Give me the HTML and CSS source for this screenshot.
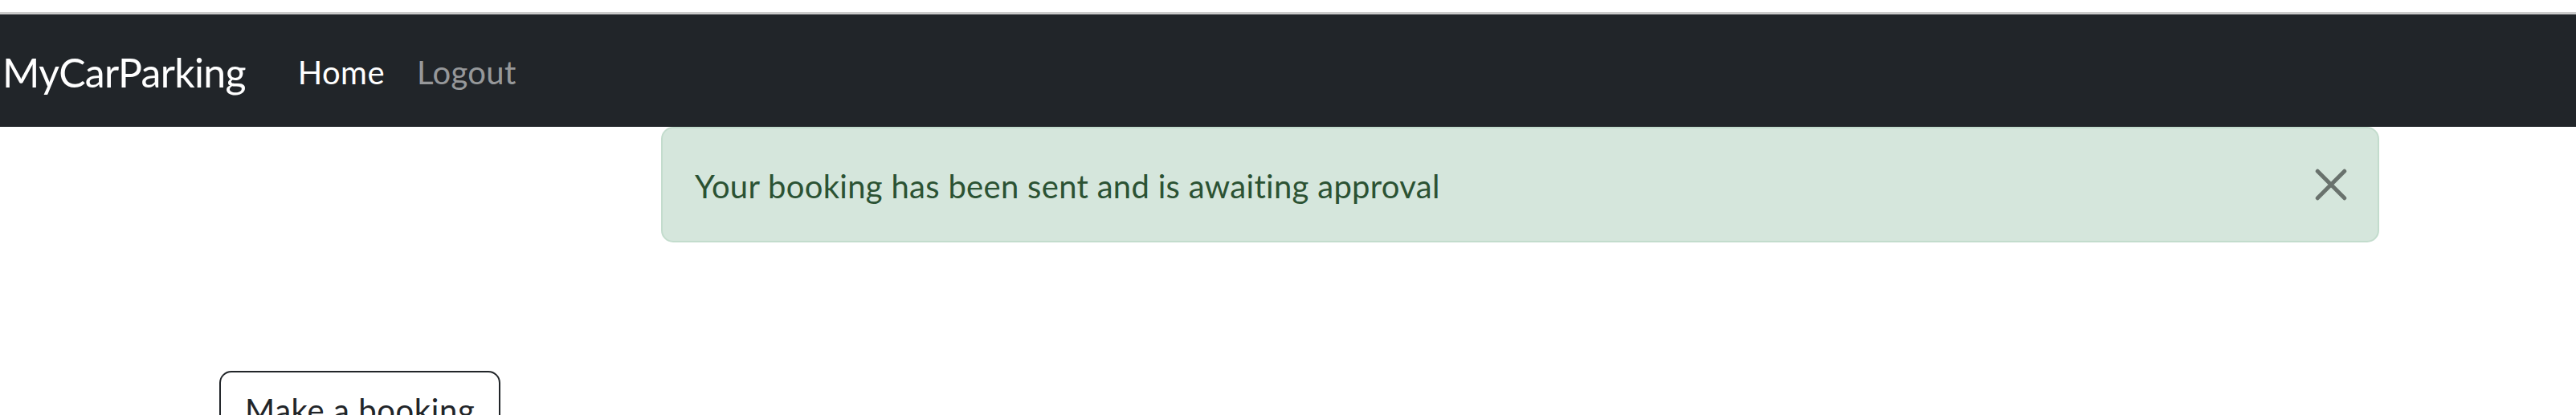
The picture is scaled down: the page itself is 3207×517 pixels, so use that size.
FILE: index.html
```html
<!DOCTYPE html>
<html lang="en">
<head>
<meta charset="utf-8">
<title>MyCarParking</title>
<link rel="stylesheet" href="styles.css">
</head>
<body>
<div class="topline"></div>
<nav class="navbar">
  <a class="brand" href="#">MyCarParking</a>
  <ul class="nav">
    <li><a class="nav-link active" href="#">Home</a></li>
    <li><a class="nav-link" href="#">Logout</a></li>
  </ul>
</nav>
<main class="content">
  <div class="alert" role="alert">
    <span class="alert-text">Your booking has been sent and is awaiting approval</span>
    <button class="btn-close" type="button" aria-label="Close">
      <svg viewBox="0 0 16 16" width="40" height="40" aria-hidden="true">
        <path d="M1.3 1.3L14.7 14.7M14.7 1.3L1.3 14.7" stroke="#000" stroke-width="2" stroke-linecap="round" fill="none"/>
      </svg>
    </button>
  </div>
  <div class="actions">
    <a class="btn-outline" href="#">Make a booking</a>
  </div>
</main>
</body>
</html>
```

FILE: styles.css
```css
html, body {
  margin: 0;
  padding: 0;
  background: #ffffff;
  font-family: "Lato", "Open Sans", sans-serif;
  font-variant-ligatures: none;
  color: #212529;
  overflow: hidden;
}

.topline {
  height: 15px;
  border-bottom: 3px solid #cbcbcb;
  background: #ffffff;
}

.navbar {
  display: flex;
  align-items: center;
  height: 140px;
  padding: 4px 0 0 3px;
  background: #212529;
  box-sizing: border-box;
}

.brand {
  font-size: 50px;
  line-height: 75px;
  letter-spacing: -0.7px;
  color: #ffffff;
  text-decoration: none;
  margin-right: 45px;
}

.nav {
  display: flex;
  list-style: none;
  margin: 0;
  padding: 0;
}

.nav-link {
  display: block;
  padding: 0 20px;
  font-size: 40px;
  line-height: 60px;
  letter-spacing: 0.4px;
  color: rgba(255, 255, 255, 0.55);
  text-decoration: none;
}

.nav-link.active {
  color: #ffffff;
}

.content {
  display: flex;
  flex-direction: column;
  align-items: flex-start;
}

.alert {
  box-sizing: border-box;
  display: flex;
  align-items: center;
  justify-content: space-between;
  margin-left: 823px;
  width: 2139px;
  height: 144px;
  padding: 0 38px 0 40px;
  background: #d5e6dc;
  border: 2.5px solid #c3dccd;
  border-radius: 15px;
  color: #2b5233;
  font-size: 40px;
  line-height: 60px;
}

.alert-text {
  padding-top: 4px;
  letter-spacing: 0.3px;
}

.btn-close {
  display: flex;
  width: 40px;
  height: 40px;
  padding: 0;
  border: 0;
  background: transparent;
  opacity: 0.5;
  cursor: pointer;
}

.actions {
  margin-top: 160px;
  margin-left: 273px;
}

.btn-outline {
  display: inline-block;
  padding: 17px 30px 13px;
  font-size: 40px;
  line-height: 60px;
  letter-spacing: 0.6px;
  color: #212529;
  text-decoration: none;
  border: 2.5px solid #212529;
  border-radius: 15px;
}
```
